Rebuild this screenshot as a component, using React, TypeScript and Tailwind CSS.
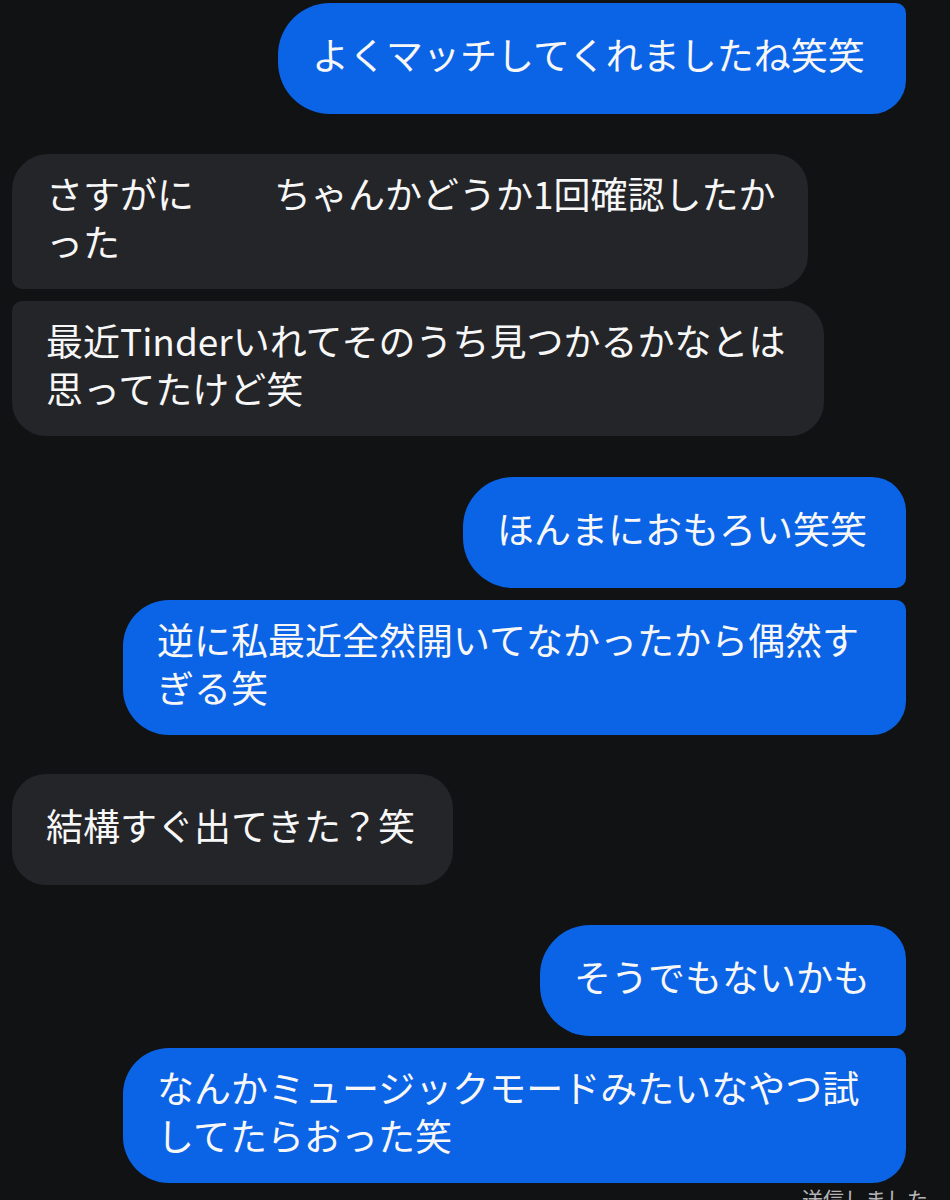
import type { ReactNode } from 'react';

type Side = 'me' | 'them';

type BubbleProps = {
  side: Side;
  width: string;
  lines: number;
  corners: string;
  children: ReactNode;
};

function Bubble({ side, width, lines, corners, children }: BubbleProps) {
  const base =
    side === 'me'
      ? 'self-end mr-[44px] bg-[#0b63e5]'
      : 'self-start ml-[12px] bg-[#242529]';
  const height = lines === 1 ? 'h-[111px]' : 'h-[135px]';
  return (
    <div className={`${base} ${width} ${height} ${corners} flex items-center pb-[10px] pl-[34px] text-[37px] leading-[48px] text-[#f7f7f7] whitespace-nowrap`}>
      <p>{children}</p>
    </div>
  );
}

export default function App() {
  return (
    <div
      className="flex h-[1200px] w-[950px] flex-col overflow-hidden bg-[#111214]"
      style={{ fontFamily: '"Noto Sans CJK JP", "Noto Sans", sans-serif' }}
    >
      <div className="mt-[3px] flex flex-col">
        <Bubble side="me" width="w-[628px]" lines={1} corners="rounded-l-[52px] rounded-tr-[10px] rounded-br-[34px]">
          よくマッチしてくれましたね笑笑
        </Bubble>

        <div className="mt-[40px] flex flex-col gap-[12px]">
          <Bubble side="them" width="w-[796px]" lines={2} corners="rounded-tl-[36px] rounded-bl-[10px] rounded-r-[34px]">
            さすがに<span className="inline-block w-[80px]" />ちゃんかどうか1回確認したか
            <br />
            った
          </Bubble>
          <Bubble side="them" width="w-[812px]" lines={2} corners="rounded-tl-[10px] rounded-bl-[34px] rounded-r-[34px]">
            最近Tinderいれてそのうち見つかるかなとは
            <br />
            思ってたけど笑
          </Bubble>
        </div>

        <div className="mt-[41px] flex flex-col gap-[12px]">
          <Bubble side="me" width="w-[443px]" lines={1} corners="rounded-l-[50px] rounded-tr-[34px] rounded-br-[10px]">
            ほんまにおもろい笑笑
          </Bubble>
          <Bubble side="me" width="w-[783px]" lines={2} corners="rounded-l-[46px] rounded-tr-[10px] rounded-br-[34px]">
            逆に私最近全然開いてなかったから偶然す
            <br />
            ぎる笑
          </Bubble>
        </div>

        <div className="mt-[39px] flex flex-col">
          <Bubble side="them" width="w-[441px]" lines={1} corners="rounded-[34px]">
            結構すぐ出てきた？笑
          </Bubble>
        </div>

        <div className="mt-[40px] flex flex-col gap-[12px]">
          <Bubble side="me" width="w-[366px]" lines={1} corners="rounded-l-[50px] rounded-tr-[34px] rounded-br-[10px]">
            そうでもないかも
          </Bubble>
          <Bubble side="me" width="w-[783px]" lines={2} corners="rounded-l-[46px] rounded-tr-[10px] rounded-br-[34px]">
            なんかミュージックモードみたいなやつ試
            <br />
            してたらおった笑
          </Bubble>
        </div>

        <p className="mr-[22px] mt-[1px] self-end text-[21px] leading-[28px] text-[#b5b5b8]">送信しました</p>
      </div>
    </div>
  );
}
